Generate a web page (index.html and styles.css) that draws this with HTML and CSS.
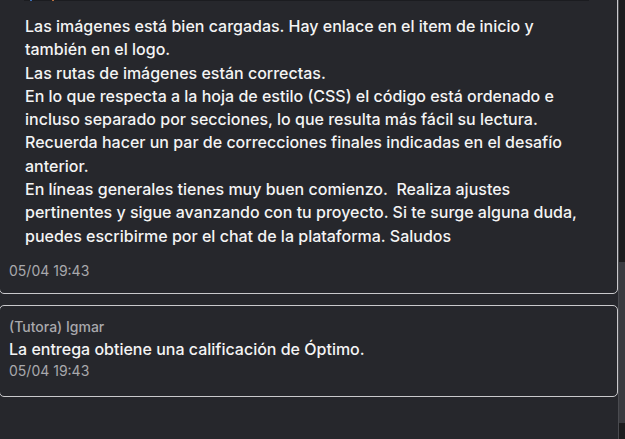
FILE: index.html
```html
<!DOCTYPE html>
<html lang="es">
<head>
<meta charset="utf-8">
<link rel="stylesheet" href="styles.css">
</head>
<body>
<div class="viewport">
  <main class="feed">
    <article class="card card-first">
      <div class="attachment">
        <span class="chip chip-blue"></span>
        <span class="chip chip-orange"></span>
      </div>
      <div class="body">
        <p>Las imágenes está bien cargadas. Hay enlace en el item de inicio y también en el logo.</p>
        <p>Las rutas de imágenes están correctas.</p>
        <p>En lo que respecta a la hoja de estilo (CSS) el código está ordenado e incluso separado por secciones, lo que resulta más fácil su lectura.</p>
        <p>Recuerda hacer un par de correcciones finales indicadas en el desafío anterior.</p>
        <p>En líneas generales tienes muy buen comienzo.&nbsp; Realiza ajustes pertinentes y sigue avanzando con tu proyecto. Si te surge alguna duda, puedes escribirme por el chat de la plataforma. Saludos</p>
      </div>
      <div class="date date-first">05/04 19:43</div>
    </article>
    <article class="card card-second">
      <div class="author">(Tutora) Igmar</div>
      <div class="message">La entrega obtiene una calificación de Óptimo.</div>
      <div class="date">05/04 19:43</div>
    </article>
  </main>
  <div class="scrollbar"><div class="thumb"></div></div>
</div>
</body>
</html>
```
FILE: styles.css
```css
html, body {
  margin: 0;
  padding: 0;
  background: #26272c;
  height: 100%;
  overflow: hidden;
}
body {
  font-family: Inter, Roboto, "Liberation Sans", sans-serif;
  color: #f4f4f4;
}
.viewport {
  display: flex;
  height: 439px;
}
.feed {
  width: 619px;
  display: flex;
  flex-direction: column;
  gap: 11px;
}
.card {
  border: 1px solid #c9c9cc;
  border-radius: 5px;
  margin-left: -1px;
}
.card-first {
  margin-top: -40px;
  padding-top: 39px;
}
.attachment {
  position: relative;
  height: 0;
  margin: 0 28px 0 24px;
  border-top: 1px solid #1b1c20;
}
.chip {
  position: absolute;
  top: -3px;
  width: 2px;
  height: 3px;
}
.chip-blue { left: 6px; background: #3d6fb8; }
.chip-orange { left: 28px; background: #b86e3d; }
.body {
  padding: 14px 40px 0 25px;
  font-size: 16px;
  font-weight: 500;
  line-height: 23.3px;
}
.body p { margin: 0; }
.date {
  font-size: 14px;
  line-height: 20px;
  color: #a9a9ad;
  padding-left: 9px;
}
.date-first {
  padding-top: 13px;
  padding-bottom: 12px;
}
.card-second {
  padding: 11px 0 15px 0;
}
.author {
  font-size: 14px;
  font-weight: 500;
  line-height: 20px;
  color: #a9a9ad;
  padding-left: 9px;
}
.message {
  font-size: 16px;
  font-weight: 500;
  line-height: 24px;
  padding-left: 9px;
}
.scrollbar {
  width: 6px;
  border-left: 1px solid #4a4b50;
  background: #1c1c1e;
  display: flex;
  flex-direction: column;
}
.thumb {
  margin-top: 262px;
  height: 161px;
  background: #3a3b40;
}
```
